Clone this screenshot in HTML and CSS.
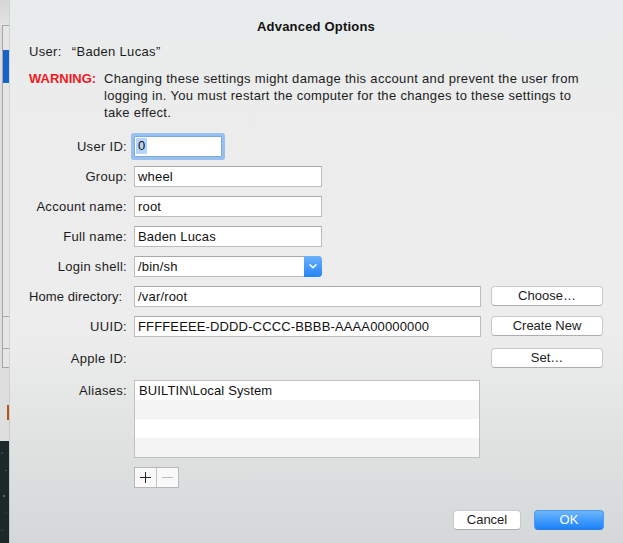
FILE: index.html
```html
<!DOCTYPE html>
<html>
<head>
<meta charset="utf-8">
<link rel="stylesheet" href="styles.css">
</head>
<body>
<div class="screen">
  <svg class="backdrop" width="9" height="543" viewBox="0 0 9 543">
    <defs>
      <linearGradient id="topg" x1="0" y1="0" x2="0" y2="1">
        <stop offset="0" stop-color="#d6d6d6"/>
        <stop offset="1" stop-color="#e4e4e4"/>
      </linearGradient>
    </defs>
    <rect x="0" y="0" width="9" height="441" fill="#dedede"/>
    <rect x="0" y="0" width="9" height="26" fill="url(#topg)"/>
    <rect x="3" y="26" width="6" height="342" fill="#e6e6e6"/>
    <line x1="2.5" y1="25" x2="2.5" y2="368" stroke="#a6a6a6" stroke-width="1"/>
    <line x1="2.5" y1="25.5" x2="9" y2="25.5" stroke="#a6a6a6" stroke-width="1"/>
    <line x1="2.5" y1="316.5" x2="9" y2="316.5" stroke="#a6a6a6" stroke-width="1"/>
    <line x1="2.5" y1="348.5" x2="9" y2="348.5" stroke="#a6a6a6" stroke-width="1"/>
    <line x1="2.5" y1="367.5" x2="9" y2="367.5" stroke="#a6a6a6" stroke-width="1"/>
    <rect x="3" y="50" width="6" height="33" fill="#1565c9"/>
    <rect x="7" y="405" width="2" height="15" fill="#b4521d"/>
    <rect x="0" y="441" width="9" height="102" fill="#1d2829"/>
    <rect x="1" y="452" width="2" height="2" fill="#34484a"/>
    <rect x="5" y="470" width="2" height="1" fill="#3b5255"/>
    <rect x="3" y="495" width="2" height="2" fill="#4d6468"/>
    <rect x="6" y="512" width="1" height="2" fill="#2f4244"/>
    <rect x="1" y="530" width="2" height="1" fill="#33474a"/>
  </svg>
  <div class="dialog">
    <h1 class="title">Advanced Options</h1>
    <div class="user"><span class="user-label">User:</span>“Baden Lucas”</div>
    <div class="warning">
      <span class="warn-label">WARNING:</span>
      <p class="warn-text">Changing these settings might damage this account and prevent the user from logging in. You must restart the computer for the changes to these settings to take effect.</p>
    </div>

    <div class="form">
      <div class="row">
        <span class="label">User ID:</span>
        <div class="field field-short focused"><span class="sel">0</span></div>
      </div>
      <div class="row">
        <span class="label">Group:</span>
        <div class="field field-mid">wheel</div>
      </div>
      <div class="row">
        <span class="label">Account name:</span>
        <div class="field field-mid">root</div>
      </div>
      <div class="row">
        <span class="label">Full name:</span>
        <div class="field field-mid">Baden Lucas</div>
      </div>
      <div class="row">
        <span class="label">Login shell:</span>
        <div class="field field-mid popup">
          <span class="popup-value">/bin/sh</span>
          <span class="popup-arrow">
            <svg width="8" height="5" viewBox="0 0 8 5"><polyline points="1,0.8 4,3.8 7,0.8" fill="none" stroke="#fff" stroke-width="1.5" stroke-linecap="round" stroke-linejoin="round"/></svg>
          </span>
        </div>
      </div>
      <div class="row">
        <span class="label label-wide">Home directory:</span>
        <div class="field field-long">/var/root</div>
        <button class="btn btn-side">Choose…</button>
      </div>
      <div class="row">
        <span class="label">UUID:</span>
        <div class="field field-long uuid">FFFFEEEE-DDDD-CCCC-BBBB-AAAA00000000</div>
        <button class="btn btn-side">Create New</button>
      </div>
      <div class="row row-apple">
        <span class="label">Apple ID:</span>
        <button class="btn btn-side">Set…</button>
      </div>
      <div class="row row-aliases">
        <span class="label">Aliases:</span>
        <div class="list">
          <div class="list-row">BUILTIN\Local System</div>
          <div class="list-row alt"></div>
          <div class="list-row"></div>
          <div class="list-row alt"></div>
        </div>
      </div>
      <div class="segment">
        <span class="seg seg-plus">
          <svg width="11" height="11" viewBox="0 0 11 11"><line x1="5.5" y1="0" x2="5.5" y2="11" stroke="#222" stroke-width="1"/><line x1="0" y1="5.5" x2="11" y2="5.5" stroke="#222" stroke-width="1"/></svg>
        </span>
        <span class="seg seg-minus">
          <svg width="11" height="11" viewBox="0 0 11 11"><line x1="0" y1="5.5" x2="11" y2="5.5" stroke="#bcbcbc" stroke-width="1"/></svg>
        </span>
      </div>
    </div>

    <div class="footer">
      <button class="btn btn-cancel">Cancel</button>
      <button class="btn btn-ok">OK</button>
    </div>
  </div>
</div>
</body>
</html>
```

FILE: styles.css
```css
* { box-sizing: border-box; }

html, body {
  margin: 0;
  padding: 0;
}

body {
  font-family: "Liberation Sans", Arial, sans-serif;
  font-size: 13px;
  color: #1c1c1c;
  overflow: hidden;
}

.screen {
  display: flex;
  width: 623px;
  height: 543px;
}

.backdrop {
  flex: 0 0 9px;
  display: block;
}

.dialog {
  flex: 1;
  display: flex;
  flex-direction: column;
  padding: 19px 20px 0 20px;
  background: linear-gradient(#e8ecec 0px, #ececec 110px, #ededed 330px, #d4d8d8 543px);
  box-shadow: inset 1px 0 0 rgba(0, 0, 0, 0.10);
}

.title {
  margin: 0;
  font-size: 13px;
  font-weight: bold;
  line-height: 16px;
  text-align: center;
  color: #111;
  letter-spacing: 0.2px;
}

.user {
  margin-top: 9px;
  line-height: 16px;
  letter-spacing: 0.33px;
}

.user-label {
  display: inline-block;
  margin-right: 10px;
}

.warning {
  display: flex;
  margin-top: 10px;
  line-height: 17px;
}

.warn-label {
  flex: 0 0 75px;
  font-weight: bold;
  color: #f2191e;
}

.warn-text {
  margin: 0;
  width: 484px;
  letter-spacing: 0.32px;
}

.form {
  margin-top: 15px;
  display: flex;
  flex-direction: column;
}

.row {
  display: flex;
  align-items: center;
  height: 21px;
  margin-top: 9px;
}

.row:first-child {
  margin-top: 0;
}

.label {
  flex: 0 0 98px;
  min-width: 0;
  margin-right: 7px;
  text-align: right;
  white-space: nowrap;
  letter-spacing: 0.3px;
}

.label-wide {
  text-align: left;
  letter-spacing: 0.1px;
}

.field {
  height: 21px;
  background: #fff;
  border: 1px solid #bcbcbc;
  border-top-color: #a9a9a9;
  padding: 0 3px;
  line-height: 19px;
  white-space: nowrap;
  color: #111;
  letter-spacing: 0.18px;
}

.uuid {
  letter-spacing: 0.14px;
}

.field-short { width: 88px; }
.field-mid { width: 188px; }
.field-long { width: 347px; }

.focused {
  border-color: #7ea9de;
  box-shadow: 0 0 0 3px #95c0f0;
  border-radius: 1px;
  padding-left: 1px;
}

.sel {
  display: inline-block;
  background: #b4d6fe;
  padding: 0 2px 0 2px;
  line-height: 16px;
  vertical-align: 1px;
}

.popup {
  display: flex;
  padding-right: 0;
  border-radius: 0 4px 4px 0;
}

.popup-value {
  flex: 1;
}

.popup-arrow {
  flex: 0 0 18px;
  margin: -1px -1px -1px 0;
  border-radius: 0 4px 4px 0;
  background: linear-gradient(#6bb1fa, #2384f7);
  display: flex;
  align-items: center;
  justify-content: center;
}

.btn {
  font-family: "Liberation Sans", Arial, sans-serif;
  font-size: 13px;
  color: #1c1c1c;
  height: 20px;
  padding: 0;
  line-height: 18px;
  background: #fff;
  border: 1px solid #c9c9c9;
  border-bottom-color: #adadad;
  border-radius: 4px;
  text-align: center;
}

.btn-side {
  margin-left: auto;
  width: 112px;
  margin-top: -2px;
}

.row-apple {
  margin-top: 11px;
  height: 20px;
}

.row-apple .btn-side {
  margin-top: 0;
}

.row-aliases {
  margin-top: 12px;
  height: auto;
  align-items: flex-start;
}

.row-aliases .label {
  line-height: 21px;
}

.list {
  width: 346px;
  border: 1px solid #c0c0c0;
  background: #fff;
}

.list-row {
  height: 19px;
  line-height: 19px;
  padding-left: 4px;
  color: #111;
  letter-spacing: 0.14px;
}

.list-row.alt {
  background: #f4f4f4;
}

.segment {
  display: flex;
  margin-top: 9px;
  margin-left: 105px;
  width: 45px;
  height: 21px;
  border: 1px solid #b7b7b7;
  background: #f9f9f9;
}

.seg {
  flex: 1;
  display: flex;
  align-items: center;
  justify-content: center;
}

.seg-plus {
  border-right: 1px solid #c4c4c4;
}

.footer {
  display: flex;
  justify-content: flex-end;
  gap: 13px;
  margin-top: 22px;
}

.btn-cancel {
  width: 68px;
}

.btn-ok {
  width: 70px;
  margin-right: -1px;
  color: #fff;
  border-color: #4d9cf4;
  border-bottom-color: #2a7ee8;
  background: linear-gradient(#6cb5fb, #1b82fb);
}
```
